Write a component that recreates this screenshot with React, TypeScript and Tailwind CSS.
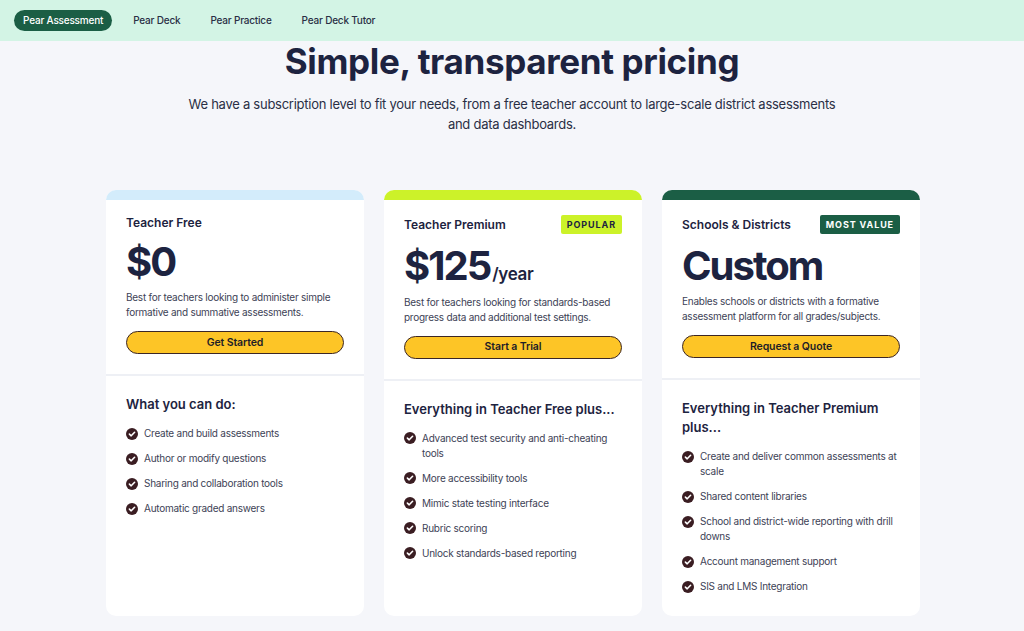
import React from "react";

type Plan = {
  name: string;
  badge?: { label: string; className: string };
  price: string;
  unit?: string;
  description: string;
  cta: string;
  strip: string;
  heading: string;
  features: string[];
};

const plans: Plan[] = [
  {
    name: "Teacher Free",
    price: "$0",
    description:
      "Best for teachers looking to administer simple formative and summative assessments.",
    cta: "Get Started",
    strip: "bg-[#d3ecfb]",
    heading: "What you can do:",
    features: [
      "Create and build assessments",
      "Author or modify questions",
      "Sharing and collaboration tools",
      "Automatic graded answers",
    ],
  },
  {
    name: "Teacher Premium",
    badge: { label: "POPULAR", className: "bg-[#ccf229] text-[#1d2340]" },
    price: "$125",
    unit: "/year",
    description:
      "Best for teachers looking for standards-based progress data and additional test settings.",
    cta: "Start a Trial",
    strip: "bg-[#ccf229]",
    heading: "Everything in Teacher Free plus...",
    features: [
      "Advanced test security and anti-cheating tools",
      "More accessibility tools",
      "Mimic state testing interface",
      "Rubric scoring",
      "Unlock standards-based reporting",
    ],
  },
  {
    name: "Schools & Districts",
    badge: { label: "MOST VALUE", className: "bg-[#1b5e45] text-white" },
    price: "Custom",
    description:
      "Enables schools or districts with a formative assessment platform for all grades/subjects.",
    cta: "Request a Quote",
    strip: "bg-[#1b5e45]",
    heading: "Everything in Teacher Premium plus...",
    features: [
      "Create and deliver common assessments at scale",
      "Shared content libraries",
      "School and district-wide reporting with drill downs",
      "Account management support",
      "SIS and LMS Integration",
    ],
  },
];

const navItems = ["Pear Assessment", "Pear Deck", "Pear Practice", "Pear Deck Tutor"];

const CheckIcon = () => (
  <svg width="12" height="12" viewBox="0 0 12 12" className="mt-[1.5px] shrink-0">
    <circle cx="6" cy="6" r="6" fill="#3a1d22" />
    <path
      d="M3.4 6.1 L5.2 7.8 L8.6 4.3"
      fill="none"
      stroke="#fff"
      strokeWidth="1.6"
      strokeLinecap="round"
      strokeLinejoin="round"
    />
  </svg>
);

const PlanCard: React.FC<{ plan: Plan }> = ({ plan }) => (
  <div className="flex w-[258px] flex-col overflow-hidden rounded-[10px] bg-white">
    <div className={`h-[10px] ${plan.strip}`} />
    <div className="px-5 pt-[15px] pb-[20px]">
      <div className="flex items-center justify-between">
        <span className="text-[12px] leading-[15px] font-semibold text-[#1d2340]">
          {plan.name}
        </span>
        {plan.badge && (
          <span
            className={`rounded-[2px] px-[6px] text-[9px] leading-[19px] font-bold tracking-[0.1em] ${plan.badge.className}`}
          >
            {plan.badge.label}
          </span>
        )}
      </div>
      <div className="mt-[11px] flex items-baseline text-[#1d2340]">
        <span className="text-[40px] leading-[42px] font-bold tracking-[-0.05em]">
          {plan.price}
        </span>
        {plan.unit && (
          <span className="ml-[2px] text-[17px] font-semibold tracking-[-0.02em]">
            {plan.unit}
          </span>
        )}
      </div>
      <p className="mt-[7px] text-[10px] leading-[15px] tracking-[-0.025em] text-[#3d4256]">
        {plan.description}
      </p>
      <button className="mt-[11px] h-[23px] w-full rounded-full border-[1.5px] border-[#3b2626] bg-[#fdc526] text-[10.5px] font-semibold tracking-[-0.01em] text-[#1d1d28]">
        {plan.cta}
      </button>
    </div>
    <div className="h-[2px] bg-[#eef0f5]" />
    <div className="flex-1 px-5 pt-[19px] pb-[22px]">
      <h3 className="text-[13px] leading-[19px] font-semibold text-[#1d2340]">
        {plan.heading}
      </h3>
      <ul className="mt-[12px] flex flex-col gap-[10px]">
        {plan.features.map((f) => (
          <li key={f} className="flex items-start gap-[6px]">
            <CheckIcon />
            <span className="text-[10px] leading-[15px] tracking-[-0.025em] text-[#3d4256]">
              {f}
            </span>
          </li>
        ))}
      </ul>
    </div>
  </div>
);

export default function App() {
  return (
    <div
      className="min-h-screen bg-[#f5f6fa]"
      style={{ fontFamily: "Inter, 'Noto Sans', sans-serif" }}
    >
      <nav className="flex h-[41px] items-center gap-[21px] bg-[#d3f4e5] px-[14px]">
        {navItems.map((item, i) => (
          <span
            key={item}
            className={
              i === 0
                ? "rounded-full bg-[#1b5e45] px-[9px] text-[10px] leading-[21px] font-medium tracking-[-0.02em] text-white"
                : "mr-[9px] text-[10px] leading-[21px] font-medium tracking-[-0.02em] text-[#2a2f45]"
            }
          >
            {item}
          </span>
        ))}
      </nav>

      <header className="text-center">
        <h1 className="text-[35px] leading-[40px] font-bold tracking-[-0.01em] text-[#1d2340]">
          Simple, transparent pricing
        </h1>
        <p className="mx-auto mt-[13px] w-[662px] text-[13px] leading-[20px] tracking-[-0.02em] text-[#2a2f45]">
          We have a subscription level to fit your needs, from a free teacher account to
          large-scale district assessments and data dashboards.
        </p>
      </header>

      <main className="mt-[56px] flex items-stretch justify-center gap-5 pb-4 pl-[2px]">
        {plans.map((p) => (
          <PlanCard key={p.name} plan={p} />
        ))}
      </main>
    </div>
  );
}
